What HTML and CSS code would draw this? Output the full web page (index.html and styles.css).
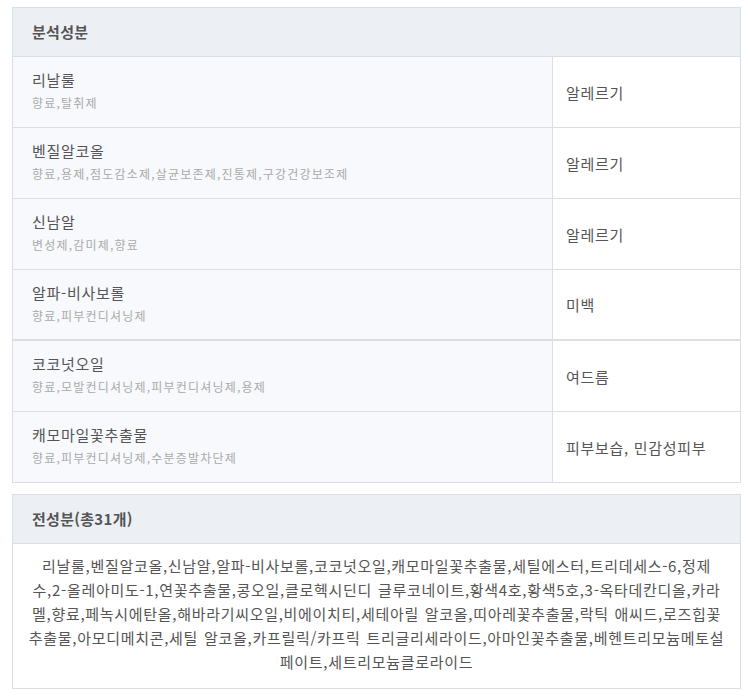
FILE: index.html
```html
<!DOCTYPE html>
<html lang="ko">
<head>
<meta charset="utf-8">
<link rel="stylesheet" href="styles.css">
</head>
<body>
<section class="box">
  <div class="box-head">분석성분</div>
  <div class="row">
    <div class="name-cell"><div class="name">리날룰</div><div class="sub">향료,탈취제</div></div>
    <div class="eff">알레르기</div>
  </div>
  <div class="row">
    <div class="name-cell"><div class="name">벤질알코올</div><div class="sub">향료,용제,점도감소제,살균보존제,진통제,구강건강보조제</div></div>
    <div class="eff">알레르기</div>
  </div>
  <div class="row">
    <div class="name-cell"><div class="name">신남알</div><div class="sub">변성제,감미제,향료</div></div>
    <div class="eff">알레르기</div>
  </div>
  <div class="row row-thick">
    <div class="name-cell"><div class="name">알파-비사보롤</div><div class="sub">향료,피부컨디셔닝제</div></div>
    <div class="eff">미백</div>
  </div>
  <div class="row">
    <div class="name-cell"><div class="name">코코넛오일</div><div class="sub">향료,모발컨디셔닝제,피부컨디셔닝제,용제</div></div>
    <div class="eff">여드름</div>
  </div>
  <div class="row row-last">
    <div class="name-cell"><div class="name">캐모마일꽃추출물</div><div class="sub">향료,피부컨디셔닝제,수분증발차단제</div></div>
    <div class="eff">피부보습, 민감성피부</div>
  </div>
</section>
<section class="box box-all">
  <div class="box-head">전성분(총31개)</div>
  <p class="all">리날룰,벤질알코올,신남알,알파-비사보롤,코코넛오일,캐모마일꽃추출물,세틸에스터,트리데세스-6,정제<br>수,2-올레아미도-1,연꽃추출물,콩오일,클로헥시딘디 글루코네이트,황색4호,황색5호,3-옥타데칸디올,카라<br>멜,향료,페녹시에탄올,해바라기씨오일,비에이치티,세테아릴 알코올,띠아레꽃추출물,락틱 애씨드,로즈힙꽃<br>추출물,아모디메치콘,세틸 알코올,카프릴릭/카프릭 트리글리세라이드,아마인꽃추출물,베헨트리모늄메토설<br>페이트,세트리모늄클로라이드</p>
</section>
</body>
</html>
```

FILE: styles.css
```css
* { box-sizing: border-box; }
html, body { margin: 0; padding: 0; background: #fff; }
body {
  padding: 7px 7px 0 12px;
  font-family: "Noto Sans CJK KR", "Noto Sans", sans-serif;
  color: #555;
}
.box {
  width: 729px;
  border: 1px solid #dcdee3;
}
.box-head {
  height: 49px;
  background: #eceff4;
  border-bottom: 1px solid #dcdee3;
  padding: 0 0 0 19px;
  font-size: 15px;
  font-weight: 700;
  line-height: 48px;
  color: #555;
  letter-spacing: 0.3px;
}
.row {
  display: flex;
  height: 71px;
  border-bottom: 1px solid #dcdee3;
}
.row-thick { border-bottom-width: 2px; height: 71px; }
.row-last { border-bottom: 0; height: 70px; }
.name-cell {
  width: 540px;
  background: #f7f9fc;
  border-right: 1px solid #dcdee3;
  padding: 12px 0 0 19px;
}
.name {
  font-size: 15px;
  line-height: 22px;
  color: #555;
  letter-spacing: 0.7px;
}
.sub {
  font-size: 12px;
  line-height: 24px;
  color: #aaa;
  letter-spacing: 1.2px;
}
.eff {
  flex: 1;
  display: flex;
  align-items: center;
  padding-left: 13px;
  font-size: 15px;
  color: #555;
  letter-spacing: 0.7px;
}
.box-all { margin-top: 11px; }
.all {
  margin: 0;
  padding: 10px 6px 14px;
  font-size: 15px;
  line-height: 24px;
  text-align: center;
  color: #555;
  letter-spacing: 0.7px;
  word-spacing: 1px;
  white-space: nowrap;
}
```
